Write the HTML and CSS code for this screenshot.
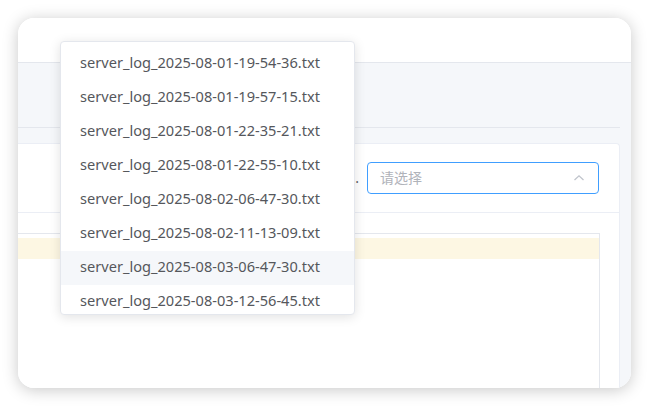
FILE: index.html
```html
<!DOCTYPE html>
<html lang="zh-CN">
<head>
<meta charset="utf-8">
<title>日志选择</title>
<link rel="stylesheet" href="styles.css">
</head>
<body>
<div class="window">
  <div class="header"></div>
  <div class="main">
    <div class="tabs"></div>
    <div class="card">
      <div class="card-head">
        <span class="label">.</span>
        <div class="select">
          <span class="placeholder">请选择</span>
          <svg class="chevron" width="14" height="14" viewBox="0 0 14 14"><path d="M2.5 9 L7 4.8 L11.5 9" fill="none" stroke="#c0c4cc" stroke-width="1.3"/></svg>
        </div>
      </div>
      <div class="card-body">
        <div class="table">
          <div class="row-warn"></div>
        </div>
      </div>
    </div>
  </div>
  <ul class="dropdown">
    <li>server_log_2025-08-01-19-54-36.txt</li>
    <li>server_log_2025-08-01-19-57-15.txt</li>
    <li>server_log_2025-08-01-22-35-21.txt</li>
    <li>server_log_2025-08-01-22-55-10.txt</li>
    <li>server_log_2025-08-02-06-47-30.txt</li>
    <li>server_log_2025-08-02-11-13-09.txt</li>
    <li class="hover">server_log_2025-08-03-06-47-30.txt</li>
    <li>server_log_2025-08-03-12-56-45.txt</li>
  </ul>
</div>
</body>
</html>
```

FILE: styles.css
```css
* { box-sizing: border-box; }
html, body { margin: 0; padding: 0; background: #ffffff; }
body {
  width: 649px;
  height: 406px;
  overflow: hidden;
  font-family: "Noto Sans", "Noto Sans CJK SC", sans-serif;
  padding: 18px;
}
.window {
  position: relative;
  width: 613px;
  height: 370px;
  background: #ffffff;
  border-radius: 16px;
  box-shadow: 0 2px 16px rgba(0,0,0,0.22);
  overflow: hidden;
  display: flex;
  flex-direction: column;
}
.header {
  height: 45px;
  flex: none;
  background: #ffffff;
  border-bottom: 1px solid #e4e7ed;
}
.main {
  flex: 1;
  background: #f5f7fa;
  display: flex;
  flex-direction: column;
  padding-right: 11px;
}
.tabs {
  height: 65px;
  flex: none;
  border-bottom: 1px solid #e4e7ed;
}
.card {
  margin-top: 15px;
  flex: 1;
  background: #ffffff;
  border: 1px solid #ebeef5;
  border-left: none;
  border-bottom: none;
  border-top-right-radius: 4px;
  display: flex;
  flex-direction: column;
}
.card-head {
  height: 69px;
  flex: none;
  border-bottom: 1px solid #ebeef5;
  display: flex;
  align-items: flex-start;
  justify-content: flex-end;
  padding: 18px 20px 0 0;
}
.label {
  font-size: 14px;
  color: #606266;
  line-height: 32px;
  margin-right: 8px;
}
.select {
  width: 232px;
  height: 32px;
  border: 1px solid #409eff;
  border-radius: 4px;
  display: flex;
  align-items: center;
  justify-content: space-between;
  padding: 0 12px 2px 12px;
}
.placeholder {
  font-size: 14px;
  color: #b0b3ba;
  font-family: "Noto Sans CJK SC", sans-serif;
}
.chevron { display: block; margin-top: 2px; }
.card-body {
  flex: 1;
  padding: 20px 19px 0 0;
  display: flex;
}
.table {
  flex: 1;
  border: 1px solid #e4e7ed;
  border-left: none;
  border-bottom: none;
  padding-top: 4px;
}
.row-warn {
  height: 21px;
  background: #fdf7e3;
}
.dropdown {
  position: absolute;
  left: 42px;
  top: 23px;
  width: 295px;
  height: 274px;
  margin: 0;
  padding: 5px 0 0;
  list-style: none;
  background: #ffffff;
  border: 1px solid #e4e7ed;
  border-radius: 4px;
  box-shadow: 0 2px 12px rgba(0,0,0,0.12);
  overflow: hidden;
}
.dropdown li {
  height: 34px;
  line-height: 31px;
  padding: 0 19px 3px;
  font-size: 14.6px;
  color: #55575c;
  white-space: nowrap;
}
.dropdown li.hover { background: #f5f7fa; }
```
